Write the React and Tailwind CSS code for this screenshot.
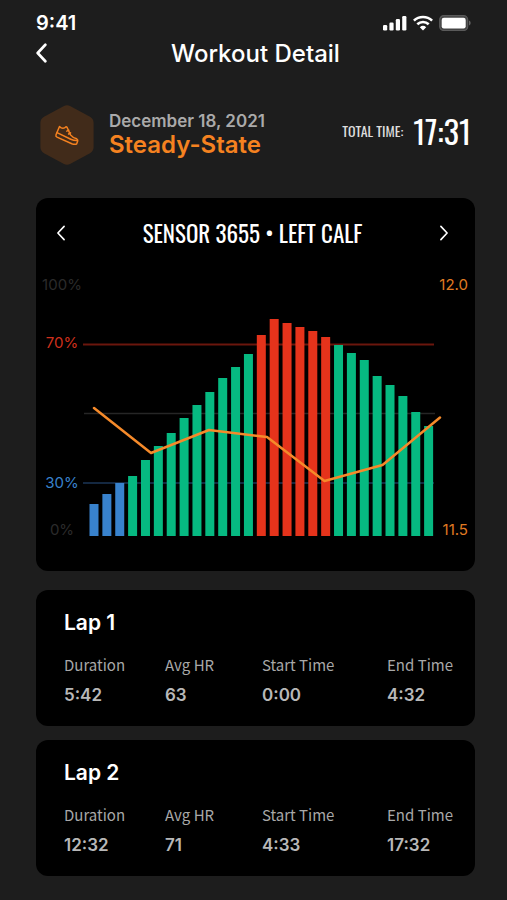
import React from "react";

const BLUE = "#3882cd";
const GREEN = "#06b981";
const RED = "#e5331b";

const bars = [
  [32, BLUE], [42, BLUE], [53, BLUE],
  [60, GREEN], [76, GREEN], [90, GREEN], [103, GREEN], [118, GREEN],
  [131, GREEN], [144, GREEN], [158, GREEN], [169, GREEN], [182, GREEN],
  [201, RED], [217, RED], [213, RED], [209, RED], [205, RED], [199, RED],
  [191, GREEN], [183, GREEN], [176, GREEN], [160, GREEN], [151, GREEN],
  [140, GREEN], [124, GREEN], [110, GREEN],
];

const laps = [
  { name: "Lap 1", duration: "5:42", hr: "63", start: "0:00", end: "4:32" },
  { name: "Lap 2", duration: "12:32", hr: "71", start: "4:33", end: "17:32" },
];

const NARROW = "font-['Oswald','Liberation_Sans_Narrow','DejaVu_Sans_Condensed',sans-serif]";

function Chevron({ className, right, weight }) {
  return (
    <svg className={className} viewBox="0 0 10 18" fill="none" stroke="currentColor" strokeWidth={weight} strokeLinecap="round" strokeLinejoin="round" aria-hidden="true">
      <path d={right ? "M1.5 1.5 8.5 9l-7 7.5" : "M8.5 1.5 1.5 9l7 7.5"} />
    </svg>
  );
}

function StatusBar() {
  return (
    <div className="flex h-[46px] items-center justify-between pr-1">
      <span className="text-xl leading-6 font-semibold">9:41</span>
      <div className="flex items-center gap-1.5">
        <svg className="h-4 w-6" viewBox="0 0 24 16" fill="#fff" aria-hidden="true">
          <rect x="0" y="10" width="4.2" height="5.5" rx="1.2" />
          <rect x="6.4" y="7.5" width="4.2" height="8" rx="1.2" />
          <rect x="12.8" y="4" width="4.2" height="11.5" rx="1.2" />
          <rect x="19.2" y="1" width="4.2" height="14.5" rx="1.2" />
        </svg>
        <svg className="h-4 w-5" viewBox="0 0 20 16" fill="none" stroke="#fff" strokeWidth="2.6" aria-hidden="true">
          <path d="M.9 5.6a13.2 13.2 0 0 1 18.2 0" />
          <path d="M4.3 9.2a8.3 8.3 0 0 1 11.4 0" />
          <path d="M10 15.4 6.8 12.2a4.7 4.7 0 0 1 6.4 0Z" fill="#fff" stroke="none" />
        </svg>
        <svg className="h-4 w-8" viewBox="0 0 32 16" aria-hidden="true">
          <rect x=".7" y=".7" width="28" height="14.8" rx="4" fill="#444" stroke="#5a5a5a" strokeWidth="1.2" />
          <rect x="2.7" y="2.8" width="24" height="10.6" rx="2.2" fill="#fff" />
          <path d="M30 5.5c2.2.8 2.2 4.2 0 5Z" fill="#626262" />
        </svg>
      </div>
    </div>
  );
}

function ShoeBadge() {
  return (
    <svg className="h-[62px] w-[54px] shrink-0" viewBox="0 0 54 62" fill="none" aria-hidden="true">
      <path d="M23.5 2.2a7 7 0 0 1 7 0l19.5 10.6a7 7 0 0 1 3.6 6.1v24.2a7 7 0 0 1-3.6 6.1L30.5 59.8a7 7 0 0 1-7 0L4 49.200a7 7 0 0 1-3.600-6.100V18.900a7 7 0 0 1 3.600-6.100Z" fill="#412b1a" />
      <g stroke="#f58220" strokeWidth="1.5" strokeLinecap="round" strokeLinejoin="round">
        <path d="M19.500 22.500 16 30.800c-.4 1 0 1.800 1 2.300l14.800 6.600c1.700.7 3.600.8 4.800.3l1.100-2.900c.3-1-.2-1.800-1-2.300-2.800-.9-4.700-1.800-6.200-3.900L27 23.200l-1-.5c-1.700 2-4.300 2.200-6.500-.2Z" />
        <path d="m17 28.600 13.800 6.600c2.100 1 4.200 1.400 6.600 1.300M26.800 27.200l2-1M28.600 30l2-1.200" />
      </g>
    </svg>
  );
}

function Chart() {
  return (
    <div className="mt-[25px] flex pr-[7px] pl-[5px] text-[15px] leading-5">
      <div className="flex w-[42px] shrink-0 flex-col items-center">
        <span className="text-[#2b2b2b]">100%</span>
        <span className="mt-[38px] text-[#cf301c]">70%</span>
        <span className="mt-[120px] text-[#3882cd]">30%</span>
        <span className="mt-[27px] text-[#2b2b2b]">0%</span>
      </div>
      <svg className="h-[265px] min-w-0 flex-1 overflow-visible" viewBox="0 0 357 265" preserveAspectRatio="none" role="img" aria-label="Heart rate zones by time">
        <path d="M0 69.500H351" stroke="#6b160d" strokeWidth="2" />
        <path d="M1 138.500H352" stroke="#262626" strokeWidth="1.500" />
        <path d="M0 208H351" stroke="#1b3657" strokeWidth="1.500" />
        {bars.map(([height, color], i) => (
          <rect key={i} x={6.5 + i * 12.87} y={261 - height} width="9" height={height} fill={color} />
        ))}
        <polyline points="11,133 68,178 126,155 184,162 241.500,206 299.500,190 357,142.500" fill="none" stroke="#f58a2a" strokeWidth="2.500" strokeLinecap="round" strokeLinejoin="round" />
      </svg>
      <div className="flex w-7 shrink-0 flex-col items-end justify-between text-[#e07b22]">
        <span>12.0</span>
        <span>11.5</span>
      </div>
    </div>
  );
}

function Stat({ label, value }) {
  return (
    <div>
      <dt className="font-['Noto_Sans_CJK_JP',sans-serif] text-[15px] leading-6 whitespace-nowrap text-[#a8a8a8]">{label}</dt>
      <dd className="mt-1.5 text-[17px] leading-6 font-semibold text-[#b8b8b8]">{value}</dd>
    </div>
  );
}

function LapCard({ lap }) {
  return (
    <section className="rounded-xl bg-black pt-[21px] pr-5 pb-[19px] pl-7">
      <h3 className="text-[21px] leading-6 font-semibold">{lap.name}</h3>
      <dl className="mt-[18px] grid grid-cols-[101fr_97fr_125fr_68fr]">
        <Stat label="Duration" value={lap.duration} />
        <Stat label="Avg HR" value={lap.hr} />
        <Stat label="Start Time" value={lap.start} />
        <Stat label="End Time" value={lap.end} />
      </dl>
    </section>
  );
}

export default function App() {
  return (
    <main className="min-h-screen bg-[#1d1d1d] pr-8 pb-6 pl-9 font-['Inter','Liberation_Sans',sans-serif] text-white">
      <StatusBar />
      <header className="grid grid-cols-[1fr_auto_1fr] items-start">
        <button type="button" aria-label="Back" className="w-4 cursor-pointer">
          <Chevron className="mt-[-3px] h-5 w-[11px]" weight="2.4" />
        </button>
        <h1 className="-mt-1 text-2xl leading-6 font-medium">Workout Detail</h1>
      </header>

      <div className="mt-[38px] flex items-center px-1">
        <ShoeBadge />
        <div className="ml-[15px] flex-1 pb-1 whitespace-nowrap">
          <p className="text-[17px] leading-6 font-semibold text-[#aaa]">December 18, 2021</p>
          <h2 className="text-2xl leading-6 font-semibold text-[#f58220]">Steady-State</h2>
        </div>
        <p className={`flex items-center gap-2.5 pb-2 whitespace-nowrap ${NARROW}`}>
          <span className="text-sm text-[#ddd]">TOTAL TIME:</span>
          <span className="text-[32px] leading-10">17:31</span>
        </p>
      </div>

      <section className="mt-8 rounded-xl bg-black pt-[17px] pb-[31px]">
        <div className="flex h-[35px] items-center justify-between px-5">
          <button type="button" aria-label="Previous sensor" className="cursor-pointer">
            <Chevron className="h-4 w-[10px]" weight="1.8" />
          </button>
          <h2 className={`text-[23px] leading-6 ${NARROW}`}>SENSOR 3655 • LEFT CALF</h2>
          <button type="button" aria-label="Next sensor" className="mr-1.5 cursor-pointer">
            <Chevron right className="h-4 w-[10px]" weight="1.8" />
          </button>
        </div>
        <Chart />
      </section>

      <div className="mt-[19px] flex flex-col gap-3.5">
        {laps.map((lap) => (
          <LapCard key={lap.name} lap={lap} />
        ))}
      </div>
    </main>
  );
}
